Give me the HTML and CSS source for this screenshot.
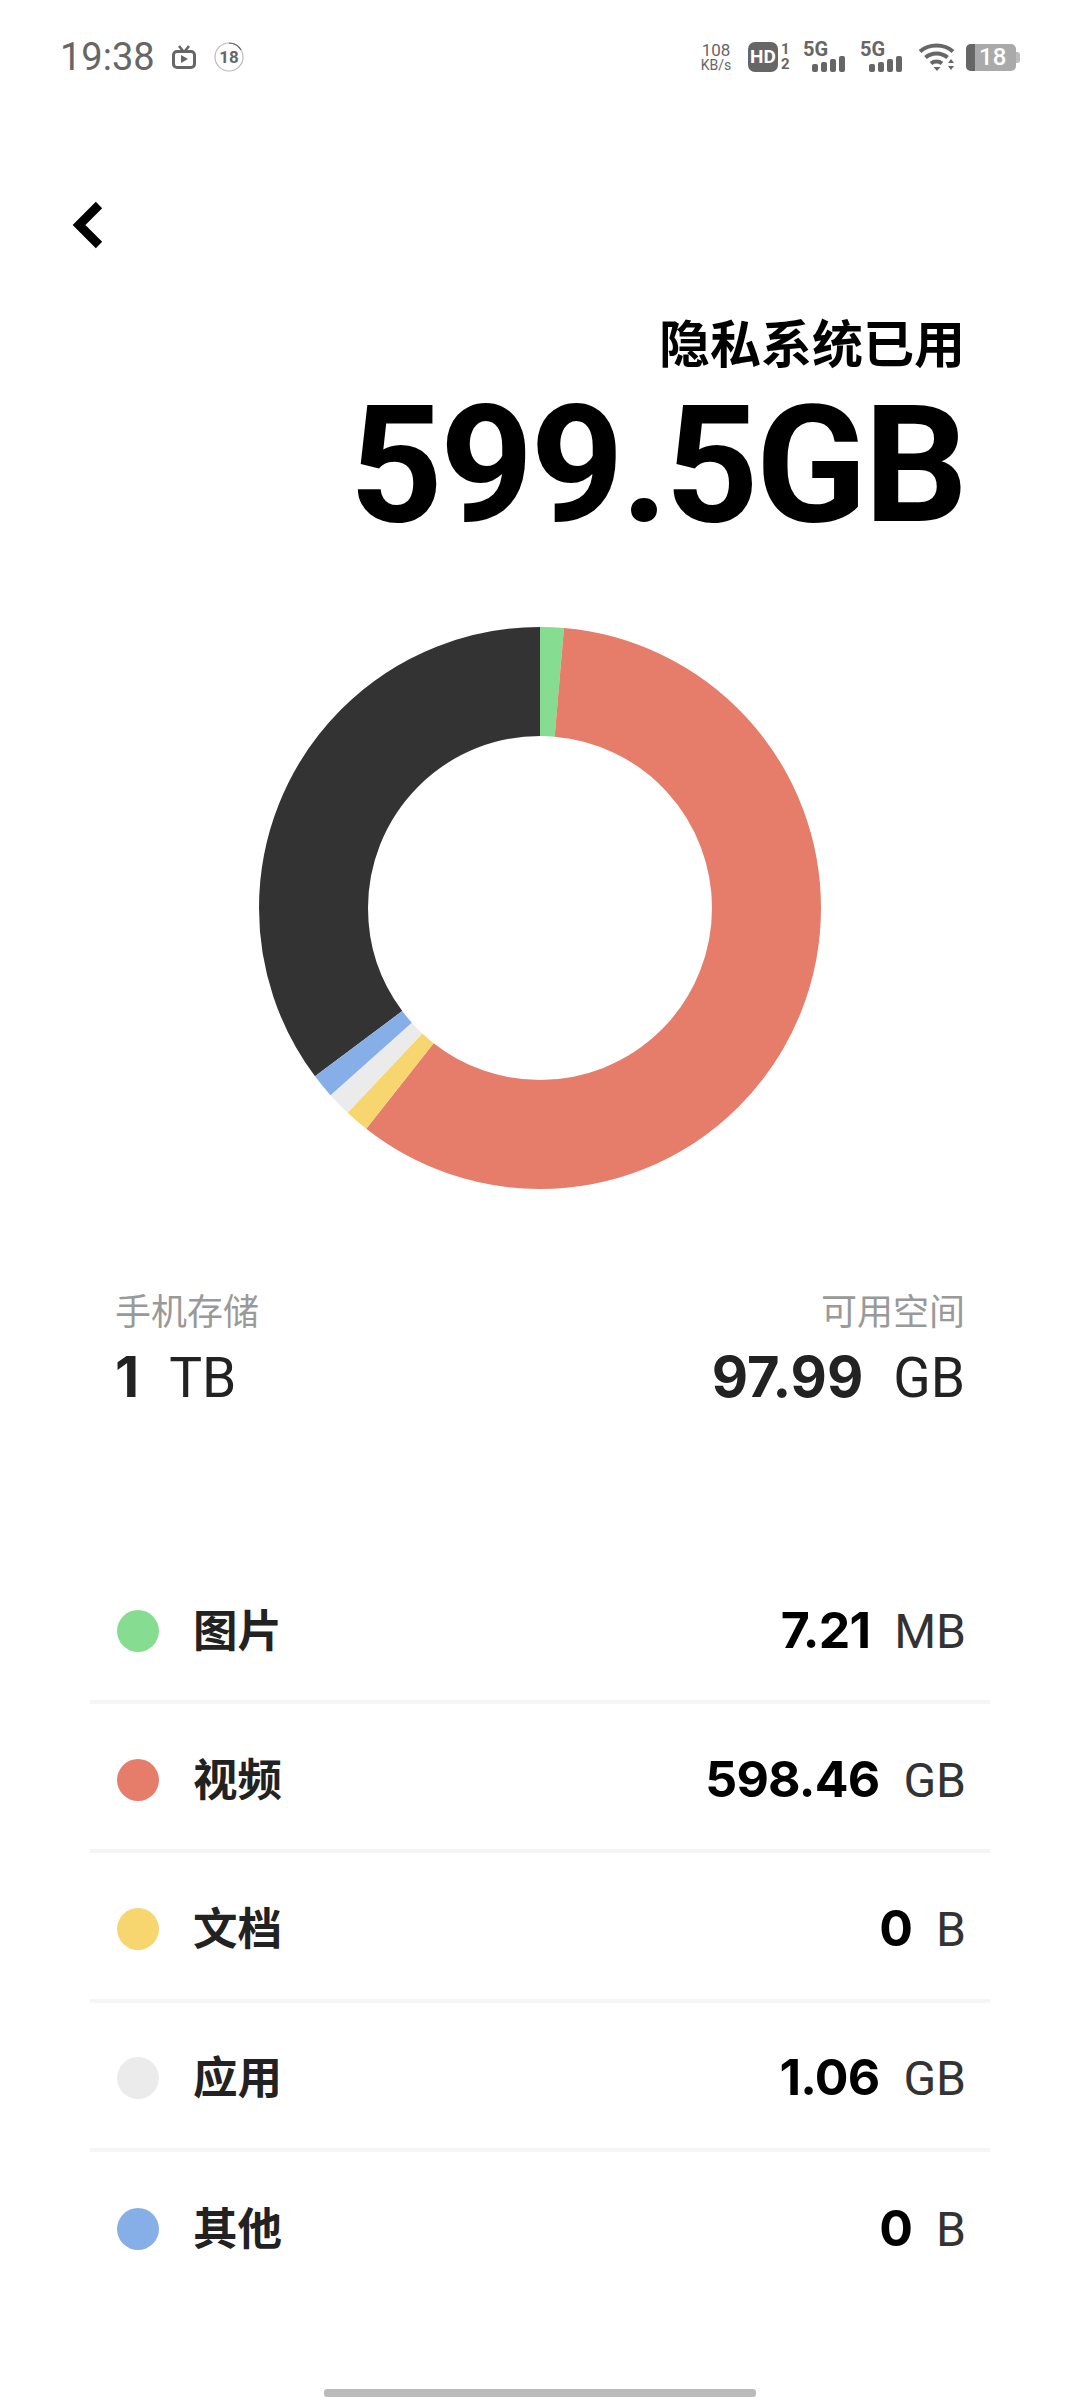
FILE: index.html
```html
<!DOCTYPE html>
<html>
<head>
	<meta charset="utf-8">
	<title>隐私系统已用</title>
	<link rel="stylesheet" href="styles.css">
</head>
<body>

<div class="page">
	<div class="status">
		<div class="status-left">
			<span class="time">19:38</span>
			<svg class="ic-tv" viewBox="0 0 24 24" width="24" height="24">
				<path d="M7 1l4 5M17 1l-4 5" fill="none" stroke="#666" stroke-width="2.6"/>
				<rect x="1.5" y="6.5" width="21" height="16" rx="3.5" fill="none" stroke="#666" stroke-width="3"/>
				<path d="M9 10l7 4-7 4z" fill="#666"/>
			</svg>
			<span class="age">
				<svg viewBox="0 0 30 30" width="30" height="30">
					<circle cx="15" cy="15" r="14" fill="none" stroke="#bbb" stroke-width="1.2"/>
					<path d="M15 1a14 14 0 0 1 12 7" fill="none" stroke="#666" stroke-width="1.2"/>
				</svg>
				<b>18</b>
			</span>
		</div>
		<div class="status-right">
			<span class="speed"><span>108</span><span>KB/s</span></span>
			<span class="hd"><b>HD</b></span>
			<span class="hd-nums"><b>1</b><b>2</b></span>
			<span class="net">
				<b>5G</b>
				<span class="bars"><i class="b1"></i><i class="b2"></i><i class="b3"></i><i class="b4"></i></span>
			</span>
			<span class="net net2">
				<b>5G</b>
				<span class="bars"><i class="b1"></i><i class="b2"></i><i class="b3"></i><i class="b4"></i></span>
			</span>
			<svg class="ic-wifi" viewBox="0 0 38 30" width="38" height="30">
				<path d="M2 9.5c9-8 24-8 33 0" fill="none" stroke="#666" stroke-width="4"/>
				<path d="M7.5 15.5c6-5.500 16-5.500 22 0" fill="none" stroke="#666" stroke-width="4"/>
				<path d="M13 21.500c3-2.600 8-2.600 11 0" fill="none" stroke="#666" stroke-width="4"/>
				<path d="M15.500 25h7l-3.500 4z" fill="#666"/>
				<path d="M30 21l3-4 3 4zM30 24h6l-3 4z" fill="#666"/>
			</svg>
			<span class="battery"><i></i><b>18</b></span>
		</div>
	</div>

	<svg class="back" viewBox="0 0 32 50" width="32" height="50">
		<path d="M27 5L7 25l20 20" fill="none" stroke="#000" stroke-width="9"/>
	</svg>

	<div class="head">
		<div class="head-label">隐私系统已用</div>
		<div class="head-num">599.5GB</div>
	</div>

	<svg class="donut" viewBox="0 0 562 562" width="562" height="562">
		<g fill="none" stroke-width="109" transform="rotate(-90 281 281)">
			<circle cx="281" cy="281" r="226.500" pathLength="360" stroke="#333333" stroke-dasharray="126.800 360" stroke-dashoffset="-233.200"/>
			<circle cx="281" cy="281" r="226.500" pathLength="360" stroke="#86dc90" stroke-dasharray="4.900 360" stroke-dashoffset="0"/>
			<circle cx="281" cy="281" r="226.500" pathLength="360" stroke="#e67d6b" stroke-dasharray="213.300 360" stroke-dashoffset="-4.900"/>
			<circle cx="281" cy="281" r="226.500" pathLength="360" stroke="#f7d56f" stroke-dasharray="5 360" stroke-dashoffset="-218.200"/>
			<circle cx="281" cy="281" r="226.500" pathLength="360" stroke="#ebebeb" stroke-dasharray="5 360" stroke-dashoffset="-223.200"/>
			<circle cx="281" cy="281" r="226.500" pathLength="360" stroke="#86afe8" stroke-dasharray="5 360" stroke-dashoffset="-228.200"/>
		</g>
	</svg>

	<div class="stats">
		<div class="stat">
			<div class="stat-label">手机存储</div>
			<div class="stat-val"><b>1</b><span>TB</span></div>
		</div>
		<div class="stat stat-right">
			<div class="stat-label">可用空间</div>
			<div class="stat-val"><b>97.99</b><span>GB</span></div>
		</div>
	</div>

	<ul class="list">
		<li class="row">
			<i class="dot green"></i><span class="row-name">图片</span>
			<span class="row-val"><b>7.21</b><span>MB</span></span>
		</li>
		<li class="row">
			<i class="dot red"></i><span class="row-name">视频</span>
			<span class="row-val"><b>598.46</b><span>GB</span></span>
		</li>
		<li class="row">
			<i class="dot yellow"></i><span class="row-name">文档</span>
			<span class="row-val"><b>0</b><span>B</span></span>
		</li>
		<li class="row">
			<i class="dot grey"></i><span class="row-name">应用</span>
			<span class="row-val"><b>1.06</b><span>GB</span></span>
		</li>
		<li class="row">
			<i class="dot blue"></i><span class="row-name">其他</span>
			<span class="row-val"><b>0</b><span>B</span></span>
		</li>
	</ul>

	<div class="home-bar"></div>
</div>

</body>
</html>
```

FILE: styles.css
```css
* {
	box-sizing: border-box;
}
body {
	margin: 0;
	color: #000;
	font-family: Inter, "Noto Sans CJK SC", sans-serif;
	background: #fff;
}
svg {
	display: block;
}
.page {
	display: flex;
	flex-direction: column;
	height: 2400px;
	overflow: hidden;
}

/* status bar */
.status {
	display: flex;
	justify-content: space-between;
	align-items: center;
	height: 30px;
	margin-top: 42px;
	padding: 0 60px;
	color: #666;
}
.status-left,
.status-right {
	display: flex;
	align-items: center;
}
.time {
	width: 112px;
	font-family: Roboto, sans-serif;
	font-size: 38px;
	line-height: 30px;
}
.ic-tv {
	margin-right: 18px;
}
.age {
	position: relative;
	width: 30px;
	height: 30px;
}
.age b {
	position: absolute;
	top: 0;
	left: 0;
	width: 30px;
	font-family: Roboto, sans-serif;
	font-size: 17px;
	line-height: 30px;
	text-align: center;
}
.speed {
	display: flex;
	flex-direction: column;
	align-items: center;
	width: 36px;
	margin-right: 14px;
	font-family: Roboto, sans-serif;
}
.speed span:first-child {
	font-size: 17px;
	line-height: 17px;
}
.speed span:last-child {
	font-size: 14px;
	line-height: 13px;
}
.hd {
	display: flex;
	justify-content: center;
	width: 30px;
	height: 30px;
	color: #fff;
	font-family: Roboto, sans-serif;
	font-size: 19px;
	line-height: 30px;
	background: #666;
	border-radius: 7px;
}
.hd-nums {
	display: flex;
	flex-direction: column;
	width: 25px;
	padding-left: 3px;
	font-family: Roboto, sans-serif;
	font-size: 15px;
	line-height: 15px;
}
.net {
	display: flex;
	flex-direction: column;
	width: 44px;
	height: 30px;
	font-family: Roboto, sans-serif;
	font-size: 20px;
	line-height: 14px;
}
.net2 {
	margin-left: 13px;
}
.bars {
	display: flex;
	align-items: flex-end;
	gap: 3px;
	height: 16px;
	margin-left: 9px;
}
.bars i {
	display: block;
	width: 6px;
	background: #666;
	border-radius: 2px;
}
.b1 {
	height: 8px;
}
.b2 {
	height: 10px;
}
.b3 {
	height: 13px;
}
.b4 {
	height: 16px;
}
.ic-wifi {
	margin-left: 14px;
}
.battery {
	display: flex;
	position: relative;
	width: 50px;
	height: 27px;
	margin: 0 4px 0 10px;
	color: #fff;
	font-family: Roboto, sans-serif;
	font-size: 24px;
	font-weight: 500;
	line-height: 27px;
	background: #aaa;
	border-radius: 5px;
}
.battery::after {
	content: "";
	position: absolute;
	top: 8px;
	right: -4px;
	width: 4px;
	height: 11px;
	background: #bbb;
	border-radius: 0 3px 3px 0;
}
.battery i {
	display: block;
	width: 9px;
	background: #666;
	border-radius: 5px 0 0 5px;
}
.battery b {
	margin-left: 4px;
	font-weight: 500;
}

/* header */
.back {
	margin: 128px 0 0 72px;
}
.head {
	padding-right: 115px;
	text-align: right;
}
.head-label {
	margin-top: 65px;
	font-size: 51px;
	font-weight: 700;
	line-height: 60px;
}
.head-num {
	margin-top: 26px;
	font-family: Roboto, sans-serif;
	font-size: 163px;
	font-weight: 700;
	line-height: 130px;
	letter-spacing: -3px;
}

/* chart */
.donut {
	margin: 96px auto 0;
}

/* totals */
.stats {
	display: flex;
	justify-content: space-between;
	margin-top: 101px;
	padding: 0 115px;
}
.stat-right {
	text-align: right;
}
.stat-label {
	color: #999;
	font-size: 36px;
	line-height: 44px;
}
.stat-val {
	margin-top: 13px;
	color: #222;
	font-size: 56px;
	line-height: 60px;
}
.stat-val span {
	margin-left: 30px;
	font-family: Roboto, sans-serif;
	font-size: 55px;
	font-weight: 400;
}

/* list */
.list {
	margin: 147px 90px 0;
	padding: 0;
	list-style: none;
}
.row {
	display: flex;
	align-items: center;
	height: 149.200px;
	padding: 6px 24px 0 27px;
	border-bottom: 4px solid #f5f5f5;
}
.row:last-child {
	border-bottom: none;
}
.dot {
	display: block;
	width: 42px;
	height: 42px;
	margin-right: 34px;
	border-radius: 50%;
}
.green {
	background: #86dc90;
}
.red {
	background: #e67d6b;
}
.yellow {
	background: #f7d56f;
}
.grey {
	background: #ebebeb;
}
.blue {
	background: #86afe8;
}
.row-name {
	color: #222;
	font-size: 44.500px;
	font-weight: 700;
	line-height: 60px;
}
.row-val {
	margin-left: auto;
	font-size: 50px;
	line-height: 60px;
}
.row-val b {
	letter-spacing: -0.800px;
}
.row-val span {
	margin-left: 24px;
	color: #333;
	font-family: Roboto, sans-serif;
	font-size: 48px;
	font-weight: 400;
}

.home-bar {
	flex: none;
	width: 432px;
	height: 8px;
	margin: auto auto 3px;
	background: #bbb;
	border-radius: 3px;
}
```
